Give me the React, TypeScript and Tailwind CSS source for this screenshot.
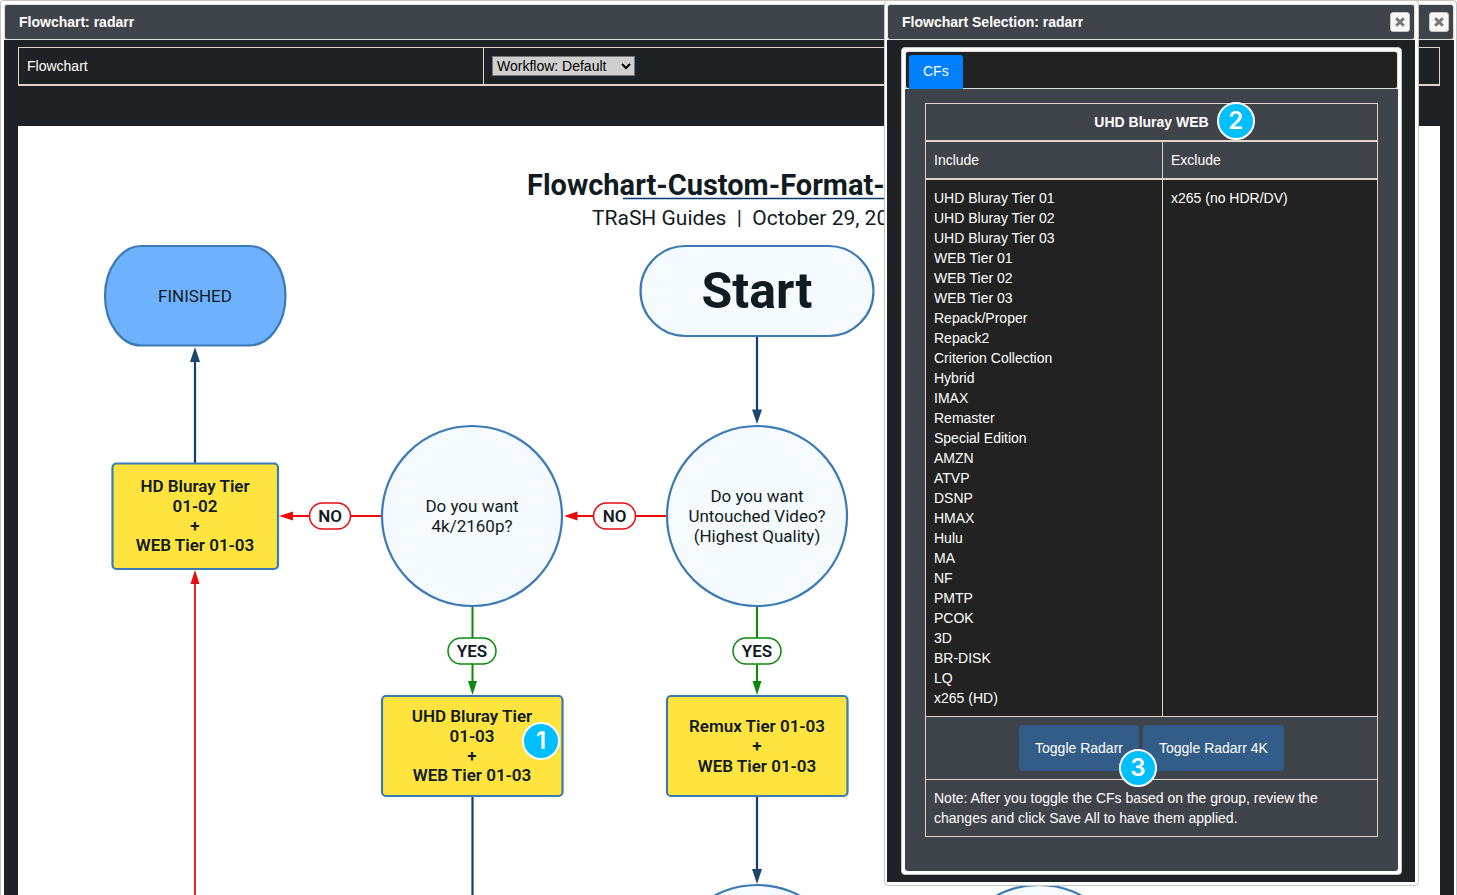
import React from "react";

const includes = [
  "UHD Bluray Tier 01", "UHD Bluray Tier 02", "UHD Bluray Tier 03",
  "WEB Tier 01", "WEB Tier 02", "WEB Tier 03",
  "Repack/Proper", "Repack2", "Criterion Collection", "Hybrid", "IMAX",
  "Remaster", "Special Edition", "AMZN", "ATVP", "DSNP", "HMAX", "Hulu",
  "MA", "NF", "PMTP", "PCOK", "3D", "BR-DISK", "LQ", "x265 (HD)",
];
const excludes = ["x265 (no HDR/DV)"];

function CloseButton({ label }: { label: string }) {
  return (
    <button
      type="button"
      aria-label={label}
      className="flex size-5 items-center justify-center rounded-[3px] border border-[#c5c5c5] bg-[#f6f6f6]"
    >
      <svg viewBox="0 0 10 10" className="size-2.5" stroke="#777" strokeWidth="3">
        <path d="M1.2 1.2 8.8 8.8M8.8 1.2 1.2 8.8" />
      </svg>
    </button>
  );
}

function TitleBar({ title }: { title: string }) {
  return (
    <header className="flex h-9 items-center justify-between rounded-[3px] border border-[#ddd] bg-[#3f444b] pr-1 pl-3.5">
      <h2 className="font-bold">{title}</h2>
      <CloseButton label={`Close ${title}`} />
    </header>
  );
}

function Badge({ n, className }: { n: number; className: string }) {
  return (
    <span
      className={`absolute flex size-[38px] items-center justify-center rounded-full border-2 border-white bg-[#00bfff] font-[Inter,sans-serif] text-2xl leading-none font-semibold text-white ${className}`}
    >
      {n}
    </span>
  );
}

function Lines({ x, y, lines, bold }: { x: number; y: number; lines: string[]; bold?: boolean }) {
  return (
    <text textAnchor="middle" fontSize="17" fill="#111b22" className={bold ? "font-semibold" : ""}>
      {lines.map((line, i) => (
        <tspan key={i} x={x} y={Math.round(y + (i - (lines.length - 1) / 2) * 19.8 + 5.7)}>
          {line}
        </tspan>
      ))}
    </text>
  );
}

function Pill({ x, y, w, color, label }: { x: number; y: number; w: number; color: string; label: string }) {
  return (
    <g>
      <rect x={x - w / 2} y={y - 13} width={w} height="26" rx="13" fill="#fff" stroke={color} strokeWidth="1.5" />
      <Lines x={x} y={y} lines={[label]} bold />
    </g>
  );
}

function Flowchart() {
  return (
    <svg
      viewBox="18 126 1422 769"
      className="block w-full bg-white font-[Roboto,sans-serif]"
      role="img"
      aria-label="Custom format flowchart"
    >
      <text x="527" y="195" fontSize="29" fill="#111b22" className="font-bold">Flowchart-Custom-Format-</text>
      <path d="M623 198.5H890" stroke="#0a3a6b" strokeWidth="1.5" />
      <text x="592" y="225" fontSize="21" fill="#111b22" className="whitespace-pre">{"TRaSH Guides  |  October 29, 20"}</text>

      <g stroke="#123f6d" strokeWidth="2.2">
        <path d="M195 463V360M757 337V411M472.500 796V895M757 796V871" />
      </g>
      <g fill="#1a466f">
        <path d="M195 347 200 362H190ZM757 424 762 409.500H752ZM757 884 762 869H752Z" />
      </g>
      <g stroke="#e80c0c" strokeWidth="1.8">
        <path d="M667 516H576M382 516H292M195 583V895" />
      </g>
      <path d="M564 516 577.500 511.500V520.500ZM279 516 293 511.500V520.500ZM195 570 199.500 584H190.500Z" fill="#e80c0c" />
      <g stroke="#0a8a0a" strokeWidth="2">
        <path d="M472.500 606V683M757 606V683" />
      </g>
      <path d="M472.500 695 477 681H468ZM757 695 761.500 681H752.500Z" fill="#0a8a0a" />

      <g stroke="#3b7ab3" strokeWidth="2.200">
        <path d="M141 246H249C269 246 285.500 268 285.500 296S269 345.500 249 345.500H141C122 345.500 105 324 105 296S122 246 141 246Z" fill="#6db1ff" />
        <rect x="640.500" y="246" width="233" height="90" rx="45" fill="#f5faff" />
        <circle cx="472" cy="516" r="90" fill="#f5faff" />
        <circle cx="757" cy="516" r="90" fill="#f5faff" />
        <circle cx="757" cy="975" r="90" fill="#f5faff" />
        <circle cx="1039" cy="975" r="90" fill="#f5faff" />
        <rect x="112.500" y="463.500" width="165.500" height="105.500" rx="4" fill="#ffe43f" />
        <rect x="382" y="696" width="180.500" height="100" rx="4" fill="#ffe43f" />
        <rect x="667" y="696" width="180.500" height="100" rx="4" fill="#ffe43f" />
      </g>

      <text x="757" y="308" fontSize="50" textAnchor="middle" fill="#111b22" className="font-bold">Start</text>
      <Lines x={195} y={296} lines={["FINISHED"]} />
      <Lines x={472} y={516} lines={["Do you want", "4k/2160p?"]} />
      <Lines x={757} y={516} lines={["Do you want", "Untouched Video?", "(Highest Quality)"]} />
      <Lines x={195} y={516} lines={["HD Bluray Tier", "01-02", "+", "WEB Tier 01-03"]} bold />
      <Lines x={472} y={746} lines={["UHD Bluray Tier", "01-03", "+", "WEB Tier 01-03"]} bold />
      <Lines x={757} y={746} lines={["Remux Tier 01-03", "+", "WEB Tier 01-03"]} bold />
      <Pill x={330} y={516} w={41} color="#e80c0c" label="NO" />
      <Pill x={614.5} y={516} w={42} color="#e80c0c" label="NO" />
      <Pill x={472} y={651} w={48} color="#0a8a0a" label="YES" />
      <Pill x={757} y={651} w={48} color="#0a8a0a" label="YES" />

      <circle cx="541" cy="741" r="18" fill="#00bfff" stroke="#fff" strokeWidth="2" />
      <text x="541" y="749" fontSize="24" textAnchor="middle" fill="#fff" className="font-[Inter,sans-serif] font-semibold">1</text>
    </svg>
  );
}

function SelectionDialog() {
  return (
    <section className="absolute top-0 right-[38px] w-[535px] rounded border border-[#c5c5c5] bg-white py-[3px] pr-[3px] pl-0.5">
      <TitleBar title="Flowchart Selection: radarr" />
      <div className="bg-[#1f2224] py-[7px] pr-[13px] pl-3.5">
        <div className="rounded border border-[#c5c5c5] bg-white p-[3px]">
          <nav className="flex h-[38px] items-start rounded-[3px] border border-[#ddd] bg-[#222] pt-[3px] pl-[3px]">
            <a href="#cfs" className="flex h-[34px] items-center rounded-t-[3px] bg-[#007fff] px-3.5 pb-0.5">CFs</a>
          </nav>
          <div id="cfs" className="rounded-b-[3px] bg-[#3f444b] px-5 pt-3.5 pb-[34px]">
            <table className="w-full table-fixed border-separate border-spacing-0 border border-[#ddd5c7] text-left">
              <colgroup>
                <col className="w-[237px]" />
                <col />
              </colgroup>
              <thead>
                <tr>
                  <th colSpan={2} className="border-b-2 border-[#ddd5c7] p-2 text-center">
                    <span className="relative">
                      UHD Bluray WEB
                      <Badge n={2} className="-top-3 left-full ml-2" />
                    </span>
                  </th>
                </tr>
                <tr>
                  <th className="border-r border-b-2 border-[#ddd5c7] p-2 font-normal">Include</th>
                  <th className="border-b-2 border-[#ddd5c7] p-2 font-normal">Exclude</th>
                </tr>
              </thead>
              <tbody>
                <tr className="bg-[#222] align-top">
                  <td className="border-r border-b border-[#ddd5c7] p-2">
                    <ul>{includes.map((name) => <li key={name}>{name}</li>)}</ul>
                  </td>
                  <td className="border-b border-[#ddd5c7] p-2">
                    <ul>{excludes.map((name) => <li key={name}>{name}</li>)}</ul>
                  </td>
                </tr>
                <tr>
                  <td colSpan={2} className="border-b border-[#ddd5c7] p-2">
                    <div className="flex justify-center gap-1">
                      <div className="relative z-10">
                        <button type="button" className="block h-[46px] rounded bg-[#325d88] px-4">Toggle Radarr</button>
                        <Badge n={3} className="-right-[18px] -bottom-4" />
                      </div>
                      <button type="button" className="block h-[46px] rounded bg-[#325d88] px-4">Toggle Radarr 4K</button>
                    </div>
                  </td>
                </tr>
                <tr>
                  <td colSpan={2} className="p-2">
                    Note: After you toggle the CFs based on the group, review the changes and click Save All to have them applied.
                  </td>
                </tr>
              </tbody>
            </table>
          </div>
        </div>
      </div>
    </section>
  );
}

export default function App() {
  return (
    <div className="relative min-h-screen overflow-hidden bg-white font-['Liberation_Sans',Arial,sans-serif] text-sm text-white">
      <main className="rounded-t border border-b-0 border-[#c5c5c5] pt-[3px] pr-0.5 pl-[3px]">
        <TitleBar title="Flowchart: radarr" />
        <div className="bg-[#1f2224] px-3.5 pt-[7px]">
          <table className="mb-10 w-full table-fixed border-separate border-spacing-0 border border-b-2 border-[#ddd5c7]">
            <tbody>
              <tr>
                <td className="w-[465px] border-r border-[#ddd5c7] p-2">
                  <label htmlFor="workflow">Flowchart</label>
                </td>
                <td className="px-2 py-0">
                  <select id="workflow" className="block h-5 w-[143px] border border-[#767676] bg-[#cfcfcf] text-black">
                    <option>Workflow: Default</option>
                  </select>
                </td>
              </tr>
            </tbody>
          </table>
          <Flowchart />
        </div>
      </main>
      <SelectionDialog />
    </div>
  );
}
